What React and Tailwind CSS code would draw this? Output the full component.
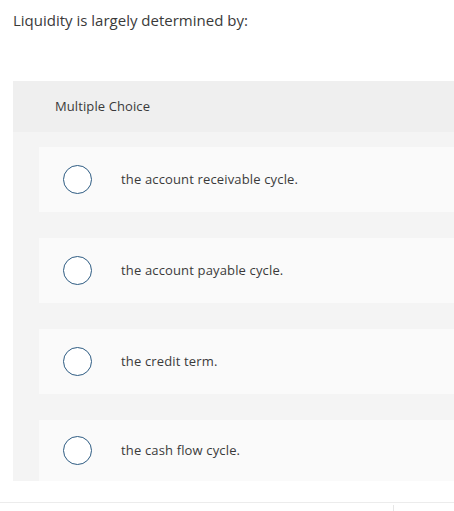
const options = [
  'the account receivable cycle.',
  'the account payable cycle.',
  'the credit term.',
  'the cash flow cycle.',
]

export default function App() {
  return (
    <div
      className="w-[454px] h-[511px] bg-white overflow-hidden text-[#3a3a3a]"
      style={{ fontFamily: '"Open Sans", Lato, sans-serif' }}
    >
      <div className="pl-[13px] pt-[10px] text-[15px] leading-[20px]">
        Liquidity is largely determined by:
      </div>

      <div className="ml-[13px] mt-[51px] bg-[#f4f4f4]">
        {/* Header */}
        <div className="h-[51px] bg-[#efefef] flex items-center pl-[42px] text-[13px] tracking-[0.1px]">
          Multiple Choice
        </div>

        {/* Options */}
        <div className="pl-[26px] pt-[15px] flex flex-col gap-[26px]">
          {options.map((opt, i) => (
            <div
              key={i}
              className={`${i === options.length - 1 ? 'h-[61px]' : 'h-[65px]'} bg-[#fafafa] flex items-center`}
            >
              <div className="ml-[24px] w-[29px] h-[29px] rounded-full border-[1.5px] border-[#2d5b82] bg-white shrink-0" />
              <span className="ml-[29px] text-[13px] tracking-[0.15px]">{opt}</span>
            </div>
          ))}
        </div>
      </div>

      <div className="mt-[21px] border-t border-[#ececec]">
        <div className="ml-[393px] mt-[2px] w-px h-[6px] bg-[#e6e6e6]" />
      </div>
    </div>
  )
}
